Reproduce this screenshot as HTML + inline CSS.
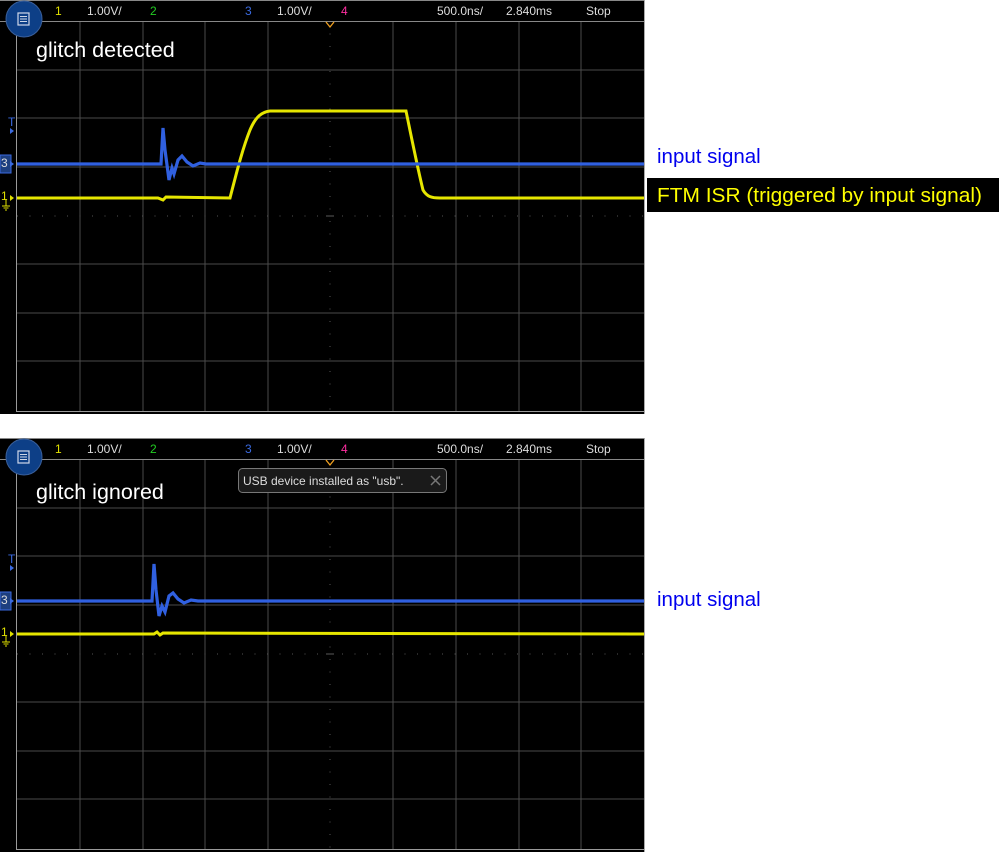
<!DOCTYPE html>
<html><head><meta charset="utf-8"><style>
html,body{margin:0;padding:0;background:#fff;width:999px;height:852px;overflow:hidden}
svg{display:block}
.hd{font-family:"Liberation Sans Narrow","Liberation Sans",sans-serif;font-size:12px}
.lab{font-family:"Liberation Sans",sans-serif;font-size:20.5px}
</style></head><body>
<svg width="999" height="852" viewBox="0 0 999 852" xmlns="http://www.w3.org/2000/svg">
<defs>
<g id="grid">
  <rect x="0" y="0" width="645" height="414" fill="#000"/>
  <g stroke="#4a4a4a" stroke-width="1">
    <line x1="80" y1="21" x2="80" y2="411"/><line x1="143" y1="21" x2="143" y2="411"/>
    <line x1="205" y1="21" x2="205" y2="411"/><line x1="268" y1="21" x2="268" y2="411"/>
    <line x1="393" y1="21" x2="393" y2="411"/><line x1="456" y1="21" x2="456" y2="411"/>
    <line x1="519" y1="21" x2="519" y2="411"/><line x1="581" y1="21" x2="581" y2="411"/>
    <line x1="17" y1="70" x2="644" y2="70"/><line x1="17" y1="118" x2="644" y2="118"/>
    <line x1="17" y1="167" x2="644" y2="167"/><line x1="17" y1="264" x2="644" y2="264"/>
    <line x1="17" y1="313" x2="644" y2="313"/><line x1="17" y1="361" x2="644" y2="361"/>
  </g>
  <g stroke="#555" stroke-width="1" stroke-dasharray="1 11.5">
    <line x1="330" y1="21" x2="330" y2="411"/>
    <line x1="17" y1="216" x2="644" y2="216" stroke-dasharray="1 11.5"/>
  </g>
  <g stroke="#5a5a5a" stroke-width="1">
    <line x1="326" y1="216" x2="334" y2="216"/>
  </g>
  <rect x="16.5" y="21.5" width="628" height="390" fill="none" stroke="#9a9a9a"/>
  <rect x="0" y="0" width="645" height="21" fill="#000"/>
  <line x1="0" y1="21.5" x2="645" y2="21.5" stroke="#888"/>
  <line x1="0" y1="0.5" x2="645" y2="0.5" stroke="#888"/>
  <line x1="644.5" y1="0" x2="644.5" y2="414" stroke="#aaa"/>
  <text class="hd" x="55" y="15" fill="#e0e000">1</text>
  <text class="hd" x="87" y="15" fill="#ddd">1.00V/</text>
  <text class="hd" x="150" y="15" fill="#22cc22">2</text>
  <text class="hd" x="245" y="15" fill="#3a6ae0">3</text>
  <text class="hd" x="277" y="15" fill="#ddd">1.00V/</text>
  <text class="hd" x="341" y="15" fill="#ff2ea0">4</text>
  <text class="hd" x="437" y="15" fill="#ddd">500.0ns/</text>
  <text class="hd" x="506" y="15" fill="#ddd">2.840ms</text>
  <text class="hd" x="586" y="15" fill="#ddd">Stop</text>
  <path d="M326 22 L330 27 L334 22" fill="none" stroke="#f0a020" stroke-width="1.3"/>
  <circle cx="24" cy="19" r="18" fill="#0d3f87" stroke="#3a5f9a"/>
  <rect x="18" y="13" width="11" height="12" fill="none" stroke="#cfd8e8" stroke-width="1.2"/>
  <line x1="20" y1="16.5" x2="27" y2="16.5" stroke="#cfd8e8"/><line x1="20" y1="19" x2="27" y2="19" stroke="#cfd8e8"/><line x1="20" y1="21.5" x2="27" y2="21.5" stroke="#cfd8e8"/>
</g>
</defs>

<!-- TOP SCOPE -->
<use href="#grid" x="0" y="0"/>
<text x="36" y="57" fill="#fff" style="font-family:'Liberation Sans',sans-serif;font-size:21.5px">glitch detected</text>
<text x="8" y="126" fill="#3a6ae0" class="hd" font-size="10">T</text>
<path d="M10 128 L14 131 L10 134Z" fill="#3a6ae0"/>
<rect x="0" y="155" width="11" height="18" fill="#1d3f80" stroke="#3a6ae0"/>
<text x="1" y="167" fill="#ddd" class="hd" font-size="10">3</text>
<path d="M10 161 L14 164 L10 167Z" fill="#3a6ae0"/>
<text x="1" y="200" fill="#e0e000" class="hd" font-size="10">1</text>
<path d="M10 195 L14 198 L10 201Z" fill="#e0e000"/>
<path d="M6 200 V206 M2 206 H10 M3.5 208 H8.5 M5 210 H7" stroke="#e0e000" stroke-width="1"/>
<path d="M17 198 L158 198 L163 200 L166 197 L230 198 C236 175 242 150 250 130 C256 116 262 112 270 111 L406 111 C412 140 418 170 423 190 C427 197 432 198 440 198 L644 198" fill="none" stroke="#e6e600" stroke-width="3"/>
<path d="M17 164 L161 164 L163 128 L165 150 L169 180 L172 168 L174 174 L178 160 L182 156 L187 162 L193 166 L200 163 L206 164 L644 164" fill="none" stroke="#3060e0" stroke-width="3.2"/>

<!-- BOTTOM SCOPE -->
<use href="#grid" x="0" y="438"/>
<text x="36" y="499" fill="#fff" style="font-family:'Liberation Sans',sans-serif;font-size:21.5px">glitch ignored</text>
<rect x="238.5" y="468.5" width="208" height="24" rx="4" fill="#1a1a1a" stroke="#777"/>
<text x="243" y="485" fill="#ddd" class="hd">USB device installed as "usb".</text>
<path d="M431 476 L440 485 M440 476 L431 485" stroke="#777" stroke-width="1.5"/>
<text x="8" y="563" fill="#3a6ae0" class="hd" font-size="10">T</text>
<path d="M10 565 L14 568 L10 571Z" fill="#3a6ae0"/>
<rect x="0" y="592" width="11" height="18" fill="#1d3f80" stroke="#3a6ae0"/>
<text x="1" y="604" fill="#ddd" class="hd" font-size="10">3</text>
<path d="M10 598 L14 601 L10 604Z" fill="#3a6ae0"/>
<text x="1" y="636" fill="#e0e000" class="hd" font-size="10">1</text>
<path d="M10 631 L14 634 L10 637Z" fill="#e0e000"/>
<path d="M6 636 V642 M2 642 H10 M3.5 644 H8.5 M5 646 H7" stroke="#e0e000" stroke-width="1"/>
<path d="M17 634 L154 634 L157 632 L160 635 L163 633 L644 634" fill="none" stroke="#e6e600" stroke-width="3"/>
<path d="M17 601 L152 601 L154 564 L156 590 L159 616 L162 606 L165 612 L169 596 L173 593 L178 599 L184 603 L191 600 L198 601 L644 601" fill="none" stroke="#3060e0" stroke-width="3.2"/>

<!-- LABELS -->
<text class="lab" x="657" y="163" fill="#0000ee">input signal</text>
<rect x="647" y="178" width="352" height="34" fill="#000"/>
<text class="lab" x="657" y="202" fill="#ffff00" textLength="325" lengthAdjust="spacingAndGlyphs">FTM ISR (triggered by input signal)</text>
<text class="lab" x="657" y="606" fill="#0000ee">input signal</text>
</svg>
</body></html>
